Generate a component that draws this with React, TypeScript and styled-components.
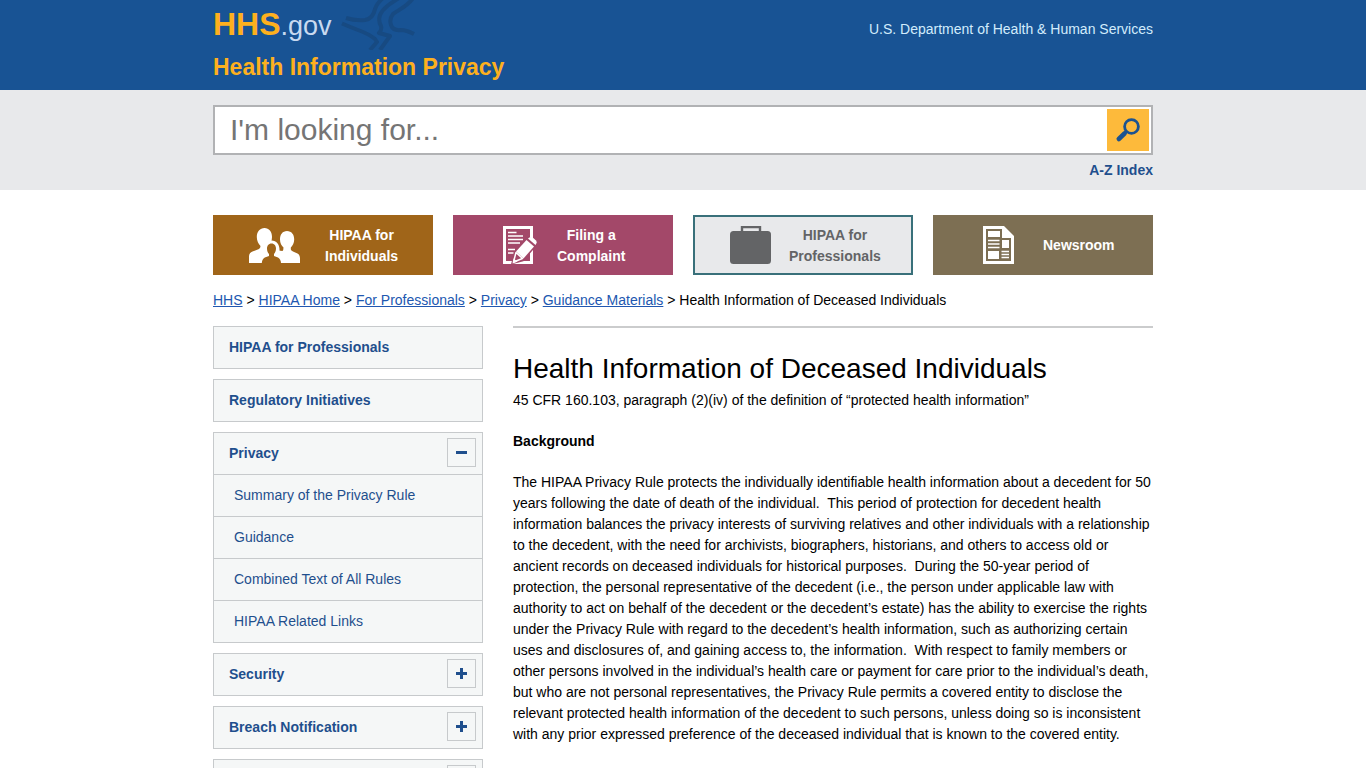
import React, { useState } from 'react';
import styled, { createGlobalStyle } from 'styled-components';

const GlobalStyle = createGlobalStyle`
  *, *::before, *::after { box-sizing: border-box; }
  body {
    margin: 0;
    background: #fff;
    color: #000;
    font-family: "Liberation Sans", Arial, Helvetica, sans-serif;
    font-size: 14px;
    line-height: 21px;
  }
  h1, p, ul, ol { margin: 0; padding: 0; }
  ul, ol { list-style: none; }
`;

const Container = styled.div`
  width: 100%;
  max-width: 940px;
  margin: 0 auto;
`;

/* Header */
const Header = styled.header`
  background: #185394;
  min-height: 90px;
`;

const HeaderRow = styled(Container)`
  display: flex;
  justify-content: space-between;
  align-items: flex-start;
`;

const Brand = styled.div`
  display: flex;
  align-items: flex-start;
  gap: 9px;
  height: 50px;
`;

const Logo = styled.a`
  padding-top: 4px;
  font-size: 27px;
  line-height: 40px;
  color: #c8daf0;
  text-decoration: none;
`;

const LogoStrong = styled.strong`
  font-size: 32px;
  color: #fdb01e;
`;

const DepartmentLink = styled.a`
  margin-top: 19px;
  color: #d2ecfc;
  text-decoration: none;
`;

const SiteTitle = styled.a`
  display: inline-block;
  margin-top: 4px;
  font-size: 23px;
  font-weight: bold;
  line-height: 26px;
  color: #fdb01e;
  text-decoration: none;
`;

/* Search */
const SearchBand = styled.section`
  background: #e8e9eb;
  padding: 15px 0 9px;
`;

const SearchForm = styled.form`
  display: flex;
  height: 50px;
  padding: 2px;
  border: 2px solid #b1b2b4;
  background: #fff;
`;

const SearchInput = styled.input`
  flex: 1;
  min-width: 0;
  padding: 0 13px;
  border: 0;
  background: transparent;
  color: #333;
  font-family: inherit;
  font-size: 30px;
  &::placeholder { color: #757575; opacity: 1; }
`;

const SearchButton = styled.button`
  width: 42px;
  height: 42px;
  padding: 0;
  border: 0;
  background: #fdba3b;
  cursor: pointer;
  svg { display: block; }
`;

const IndexLine = styled.div`
  margin-top: 5px;
  text-align: right;
`;

const IndexLink = styled.a`
  color: #1f4f8d;
  font-weight: bold;
  text-decoration: none;
`;

/* Section tiles */
const Tiles = styled.nav`
  display: grid;
  grid-template-columns: repeat(4, 1fr);
  gap: 20px;
  margin-top: 25px;
`;

const Tile = styled.a<{ $color: string; $inset: number; $gap: number; $active?: boolean }>`
  display: flex;
  align-items: center;
  gap: ${p => p.$gap}px;
  height: 60px;
  padding-left: ${p => p.$inset}px;
  border: 2px solid ${p => (p.$active ? '#39707a' : p.$color)};
  background: ${p => p.$color};
  color: ${p => (p.$active ? '#636466' : '#fff')};
  font-weight: bold;
  text-align: center;
  text-decoration: none;
  svg { flex: none; }
`;

const TileLabel = styled.span`
  padding-top: 2px;
`;

/* Breadcrumb */
const Breadcrumb = styled.nav`
  margin: 15px 0;
`;

const Crumb = styled.a`
  color: #2157b0;
  text-decoration: underline;
`;

/* Body columns */
const Columns = styled.div`
  display: grid;
  grid-template-columns: 270px minmax(0, 1fr);
  gap: 30px;
  align-items: start;
`;

const SideMenu = styled.ul`
  display: flex;
  flex-direction: column;
  gap: 10px;
`;

const MenuItem = styled.li`
  border: 1px solid #c7cacc;
  background: #f5f7f7;
`;

const MenuHead = styled.div`
  display: flex;
  align-items: flex-start;
  justify-content: space-between;
  height: 41px;
  padding: 5px 6px 0 15px;
`;

const MenuLink = styled.a`
  margin-top: 5px;
  color: #1f4f8d;
  font-weight: bold;
  text-decoration: none;
`;

const Toggle = styled.button`
  display: flex;
  align-items: center;
  justify-content: center;
  width: 29px;
  height: 29px;
  padding: 0;
  border: 1px solid #c7cacc;
  background: #f5f7f7;
  cursor: pointer;
`;

const SubItem = styled.li`
  display: flex;
  align-items: center;
  height: 42px;
  padding-left: 20px;
  border-top: 1px solid #c7cacc;
`;

const SubLink = styled.a`
  color: #1f4f8d;
  text-decoration: none;
`;

const Article = styled.main`
  padding-top: 24px;
  border-top: 2px solid #cbcccd;
`;

const PageTitle = styled.h1`
  margin-bottom: 4px;
  font-size: 28px;
  font-weight: normal;
  line-height: 34px;
`;

const Paragraph = styled.p`
  margin-bottom: 20px;
`;

const EagleMark = () => (
  <svg width="76" height="50" viewBox="0 0 76 50" fill="none" stroke="#174a82" strokeWidth="4" strokeLinejoin="round" aria-hidden="true">
    <path d="M5 18 Q14 21 24 20 C30 19 33 14 34 9 Q36 3 42 -2" />
    <path d="M1 23.500 Q9 27 17 30 Q28 34 34 39 L36 42 L29 50" />
    <path d="M58 -2 C50 3 42 8 39 15 Q37 21 40 26 Q41 30 38 33 L49 36 L39 50" />
    <path d="M72 -2 C67 6 59 9 52 14 Q48 19 50 25 Q52 31 60 30 Q65 30 73 34" />
  </svg>
);

const SearchIcon = () => (
  <svg width="42" height="42" viewBox="0 0 42 42" fill="none" stroke="#1b5390" aria-hidden="true">
    <circle cx="24.500" cy="17.500" r="6.900" strokeWidth="2.800" />
    <path d="M19.500 22.500 17 25" strokeWidth="3" />
    <path d="M17.500 24.500 11.800 30" strokeWidth="4.600" strokeLinecap="round" />
  </svg>
);

const PeopleIcon = () => (
  <svg width="51" height="35" viewBox="0 0 51 35" fill="#fff" aria-hidden="true">
    <path d="M15.500 0C20 0 23 3.500 23 9C23 13 21.500 16 19.500 18V21L31 25V35H0V28.500Q0 25 3.500 23.500L10 21Q11.500 20 11.500 18C9.500 16 7.800 13 7.800 9C7.800 3.500 11 0 15.500 0Z" />
    <path d="M38 3C42.500 3 45.200 6.500 45.200 11.500C45.200 15 43.500 18 41.800 19.500V21.500Q42 22.500 44 23.500L48.500 25.500Q51 27 51 30V35H25V22L33.500 23Q34.500 22 34.500 19.500C32.500 18 31 15 31 11.500C31 6.500 33.500 3 38 3Z" />
    <path d="M16 20C16 15.500 18.500 12.500 22.500 12.500C27.500 12.500 30.500 16.500 30.500 22V27H16Z" />
    <path d="M22.500 15.500C25.500 15.500 27 18 27 20.500C27 23 26 25 25 26V28L29 29.500Q31.800 31 32 35H12.800Q13 31 15.800 29.500L20 28V26C18.800 25 18 23 18 20.500C18 18 19.500 15.500 22.500 15.500Z" fill="#a06519" />
  </svg>
);

const ComplaintIcon = () => (
  <svg width="34" height="38" viewBox="0 0 34 38" fill="none" stroke="#fff" aria-hidden="true">
    <path d="M28.500 12V1.500H1.500V36.500H28.500V24" strokeWidth="3" />
    <path d="M5 6.500H13.500M5 10H20M5 13.500H20M5 17H17M5 23.500H12M5 27H10.500" strokeWidth="1.700" />
    <path d="M9 37.500 12 26 25.500 11 34 18 20 34.500Z" fill="#a34869" stroke="#a34869" strokeWidth="1.500" />
    <path d="M13 25.500 23.500 14 31 20.500 20.500 32.500Z" fill="#fff" stroke="none" />
    <path d="M13 26.500 10.500 36 19.500 32.500Z" strokeWidth="1.500" strokeLinejoin="round" />
    <path d="M9.500 37.500 10.700 32.500 14.500 35.800Z" fill="#fff" stroke="none" />
    <path d="M25 12.500Q27.500 9.800 30 11.800L33 14.500Q34.500 16.500 32.500 19Z" fill="#fff" stroke="none" />
  </svg>
);

const BriefcaseIcon = () => (
  <svg width="41" height="38" viewBox="0 0 41 38" fill="#636466" aria-hidden="true">
    <rect y="5" width="41" height="33" rx="3.500" />
    <path d="M12 6V1H30V6" fill="none" stroke="#636466" strokeWidth="2.400" />
  </svg>
);

const NewsIcon = () => (
  <svg width="31" height="38" viewBox="0 0 31 38" fill="#fff" aria-hidden="true">
    <path d="M0 0H21L31 10V38H0Z" />
    <path d="M3 3H19V12H28V35H3Z" fill="#7d6f53" />
    <path d="M5 5H17V11H5ZM19 14H26V22H19ZM5 25H16V33H5Z" />
    <path d="M5 14.500H16.500M5 18H16.500M5 21.500H16.500M18.500 25.500H26M18.500 28.500H26M18.500 31.500H26" stroke="#fff" strokeWidth="1.500" />
  </svg>
);

const ToggleIcon = ({ open }: { open: boolean }) => (
  <svg width="11" height="11" viewBox="0 0 11 11" fill="none" stroke="#1f4f8d" strokeWidth="3" aria-hidden="true">
    <path d={open ? 'M0 5.500H11' : 'M0 5.500H11M5.500 0V11'} />
  </svg>
);

const crumbs = ['HHS', 'HIPAA Home', 'For Professionals', 'Privacy', 'Guidance Materials'];

const menu: { label: string; children?: string[] }[] = [
  { label: 'HIPAA for Professionals' },
  { label: 'Regulatory Initiatives' },
  {
    label: 'Privacy',
    children: ['Summary of the Privacy Rule', 'Guidance', 'Combined Text of All Rules', 'HIPAA Related Links'],
  },
  { label: 'Security', children: [] },
  { label: 'Breach Notification', children: [] },
  { label: 'Compliance & Enforcement', children: [] },
];

export default function App() {
  const [openItem, setOpenItem] = useState('Privacy');

  return (
    <>
      <GlobalStyle />
      <Header>
        <HeaderRow>
          <Brand>
            <Logo href="#"><LogoStrong>HHS</LogoStrong>.gov</Logo>
            <EagleMark />
          </Brand>
          <DepartmentLink href="#">U.S. Department of Health &amp; Human Services</DepartmentLink>
        </HeaderRow>
        <Container>
          <SiteTitle href="#">Health Information Privacy</SiteTitle>
        </Container>
      </Header>

      <SearchBand>
        <Container>
          <SearchForm role="search" onSubmit={e => e.preventDefault()}>
            <SearchInput type="text" aria-label="Search" placeholder="I'm looking for..." />
            <SearchButton type="submit" aria-label="Search"><SearchIcon /></SearchButton>
          </SearchForm>
          <IndexLine><IndexLink href="#">A-Z Index</IndexLink></IndexLine>
        </Container>
      </SearchBand>

      <Container>
        <Tiles aria-label="Sections">
          <Tile href="#" $color="#a06519" $inset={34} $gap={25}>
            <PeopleIcon />
            <TileLabel>HIPAA for<br />Individuals</TileLabel>
          </Tile>
          <Tile href="#" $color="#a34869" $inset={48} $gap={20}>
            <ComplaintIcon />
            <TileLabel>Filing a<br />Complaint</TileLabel>
          </Tile>
          <Tile href="#" $color="#e8e9eb" $inset={35} $gap={18} $active>
            <BriefcaseIcon />
            <TileLabel>HIPAA for<br />Professionals</TileLabel>
          </Tile>
          <Tile href="#" $color="#7d6f53" $inset={48} $gap={29}>
            <NewsIcon />
            <span>Newsroom</span>
          </Tile>
        </Tiles>

        <Breadcrumb aria-label="Breadcrumb">
          {crumbs.map(c => (
            <React.Fragment key={c}><Crumb href="#">{c}</Crumb>{' > '}</React.Fragment>
          ))}
          Health Information of Deceased Individuals
        </Breadcrumb>

        <Columns>
          <SideMenu>
            {menu.map(({ label, children }) => {
              const open = openItem === label;
              return (
                <MenuItem key={label}>
                  <MenuHead>
                    <MenuLink href="#">{label}</MenuLink>
                    {children && (
                      <Toggle type="button" aria-expanded={open} aria-label={label} onClick={() => setOpenItem(open ? '' : label)}>
                        <ToggleIcon open={open} />
                      </Toggle>
                    )}
                  </MenuHead>
                  {open && children && (
                    <ul>
                      {children.map(c => <SubItem key={c}><SubLink href="#">{c}</SubLink></SubItem>)}
                    </ul>
                  )}
                </MenuItem>
              );
            })}
          </SideMenu>

          <Article>
            <PageTitle>Health Information of Deceased Individuals</PageTitle>
            <Paragraph>45 CFR 160.103, paragraph (2)(iv) of the definition of “protected health information”</Paragraph>
            <Paragraph><strong>Background</strong></Paragraph>
            <Paragraph>
              The HIPAA Privacy Rule protects the individually identifiable health information about a decedent for 50
              years following the date of death of the individual.&nbsp; This period of protection for decedent health
              information balances the privacy interests of surviving relatives and other individuals with a relationship
              to the decedent, with the need for archivists, biographers, historians, and others to access old or
              ancient records on deceased individuals for historical purposes.&nbsp; During the 50-year period of
              protection, the personal representative of the decedent (i.e., the person under applicable law with
              authority to act on behalf of the decedent or the decedent’s estate) has the ability to exercise the rights
              under the Privacy Rule with regard to the decedent’s health information, such as authorizing certain
              uses and disclosures of, and gaining access to, the information.&nbsp; With respect to family members or
              other persons involved in the individual’s health care or payment for care prior to the individual’s death,
              but who are not personal representatives, the Privacy Rule permits a covered entity to disclose the
              relevant protected health information of the decedent to such persons, unless doing so is inconsistent
              with any prior expressed preference of the deceased individual that is known to the covered entity.
            </Paragraph>
          </Article>
        </Columns>
      </Container>
    </>
  );
}
